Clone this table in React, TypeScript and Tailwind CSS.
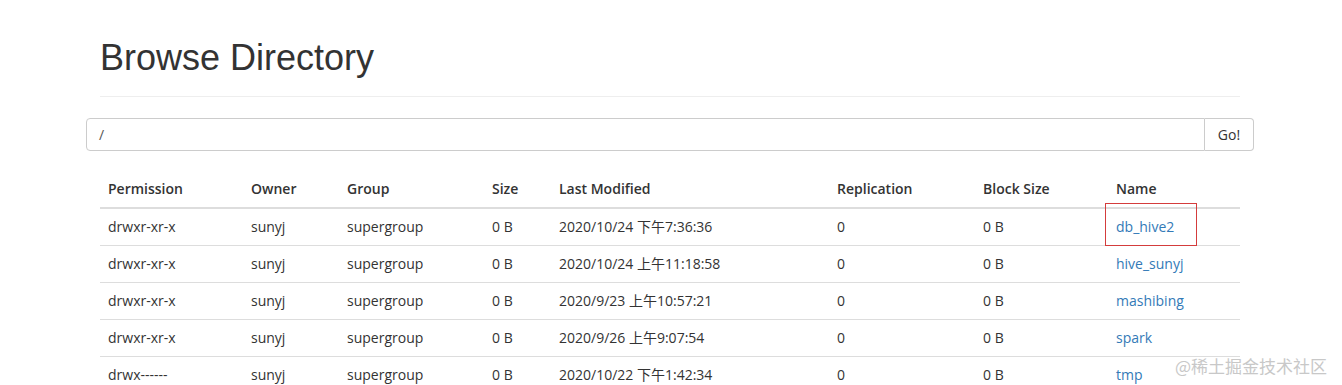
import React from "react";

const rows = [
  ["drwxr-xr-x", "sunyj", "supergroup", "0 B", "2020/10/24 下午7:36:36", "0", "0 B", "db_hive2"],
  ["drwxr-xr-x", "sunyj", "supergroup", "0 B", "2020/10/24 上午11:18:58", "0", "0 B", "hive_sunyj"],
  ["drwxr-xr-x", "sunyj", "supergroup", "0 B", "2020/9/23 上午10:57:21", "0", "0 B", "mashibing"],
  ["drwxr-xr-x", "sunyj", "supergroup", "0 B", "2020/9/26 上午9:07:54", "0", "0 B", "spark"],
  ["drwx------", "sunyj", "supergroup", "0 B", "2020/10/22 下午1:42:34", "0", "0 B", "tmp"],
];

const headers = ["Permission", "Owner", "Group", "Size", "Last Modified", "Replication", "Block Size", "Name"];
const widths = ["w-[143px]", "w-[96px]", "w-[145px]", "w-[67px]", "w-[278px]", "w-[146px]", "w-[133px]", "w-[132px]"];

export default function App() {
  return (
    <div className="relative h-[385px] w-[1342px] overflow-hidden bg-white text-[#333]">
      <div className="ml-[86px] w-[1168px]">
        <div className="mx-[14px] border-b border-[#eee] pb-[18px] pt-[38px]">
          <h1 className="text-[36px] leading-[40px] font-normal text-[#333] [font-family:'Liberation_Sans',Arial,sans-serif]">
            Browse Directory
          </h1>
        </div>
        <div className="mt-[21px] flex h-[33px] [font-family:'Open_Sans','Noto_Sans_CJK_SC',sans-serif] text-[14px]">
          <div className="flex flex-1 items-center rounded-l-[4px] border border-[#ccc] px-[12px] text-[#555]">/</div>
          <div className="flex w-[49px] items-center justify-center rounded-r-[4px] border border-l-0 border-[#ccc] bg-white text-[#333]">
            Go!
          </div>
        </div>
        <table className="mx-[14px] mt-[20px] w-[1140px] table-fixed border-collapse text-left text-[14px] leading-[20px] [font-family:'Open_Sans','Noto_Sans_CJK_SC',sans-serif]">
          <thead>
            <tr>
              {headers.map((h, i) => (
                <th key={h} className={`${widths[i]} border-b-2 border-[#ddd] px-[8px] py-[8px] font-semibold text-[#333]`}>
                  {h}
                </th>
              ))}
            </tr>
          </thead>
          <tbody>
            {rows.map((r, ri) => (
              <tr key={ri} className="border-t border-[#ddd]">
                {r.map((c, ci) => (
                  <td key={ci} className="relative px-[8px] py-[8px] whitespace-nowrap">
                    {ci === 7 ? <span className="text-[#337ab7]">{c}</span> : c}
                    {ri === 0 && ci === 7 && (
                      <div className="absolute left-[-3px] top-[-6px] h-[43px] w-[92px] border border-solid border-[#d43c3c]" />
                    )}
                  </td>
                ))}
              </tr>
            ))}
          </tbody>
        </table>
      </div>
      <div className="absolute left-[1175px] top-[354px] text-[17px] leading-[24px] text-[#c8c8c8] [font-family:'Noto_Sans_CJK_SC',sans-serif]">
        @稀土掘金技术社区
      </div>
    </div>
  );
}
